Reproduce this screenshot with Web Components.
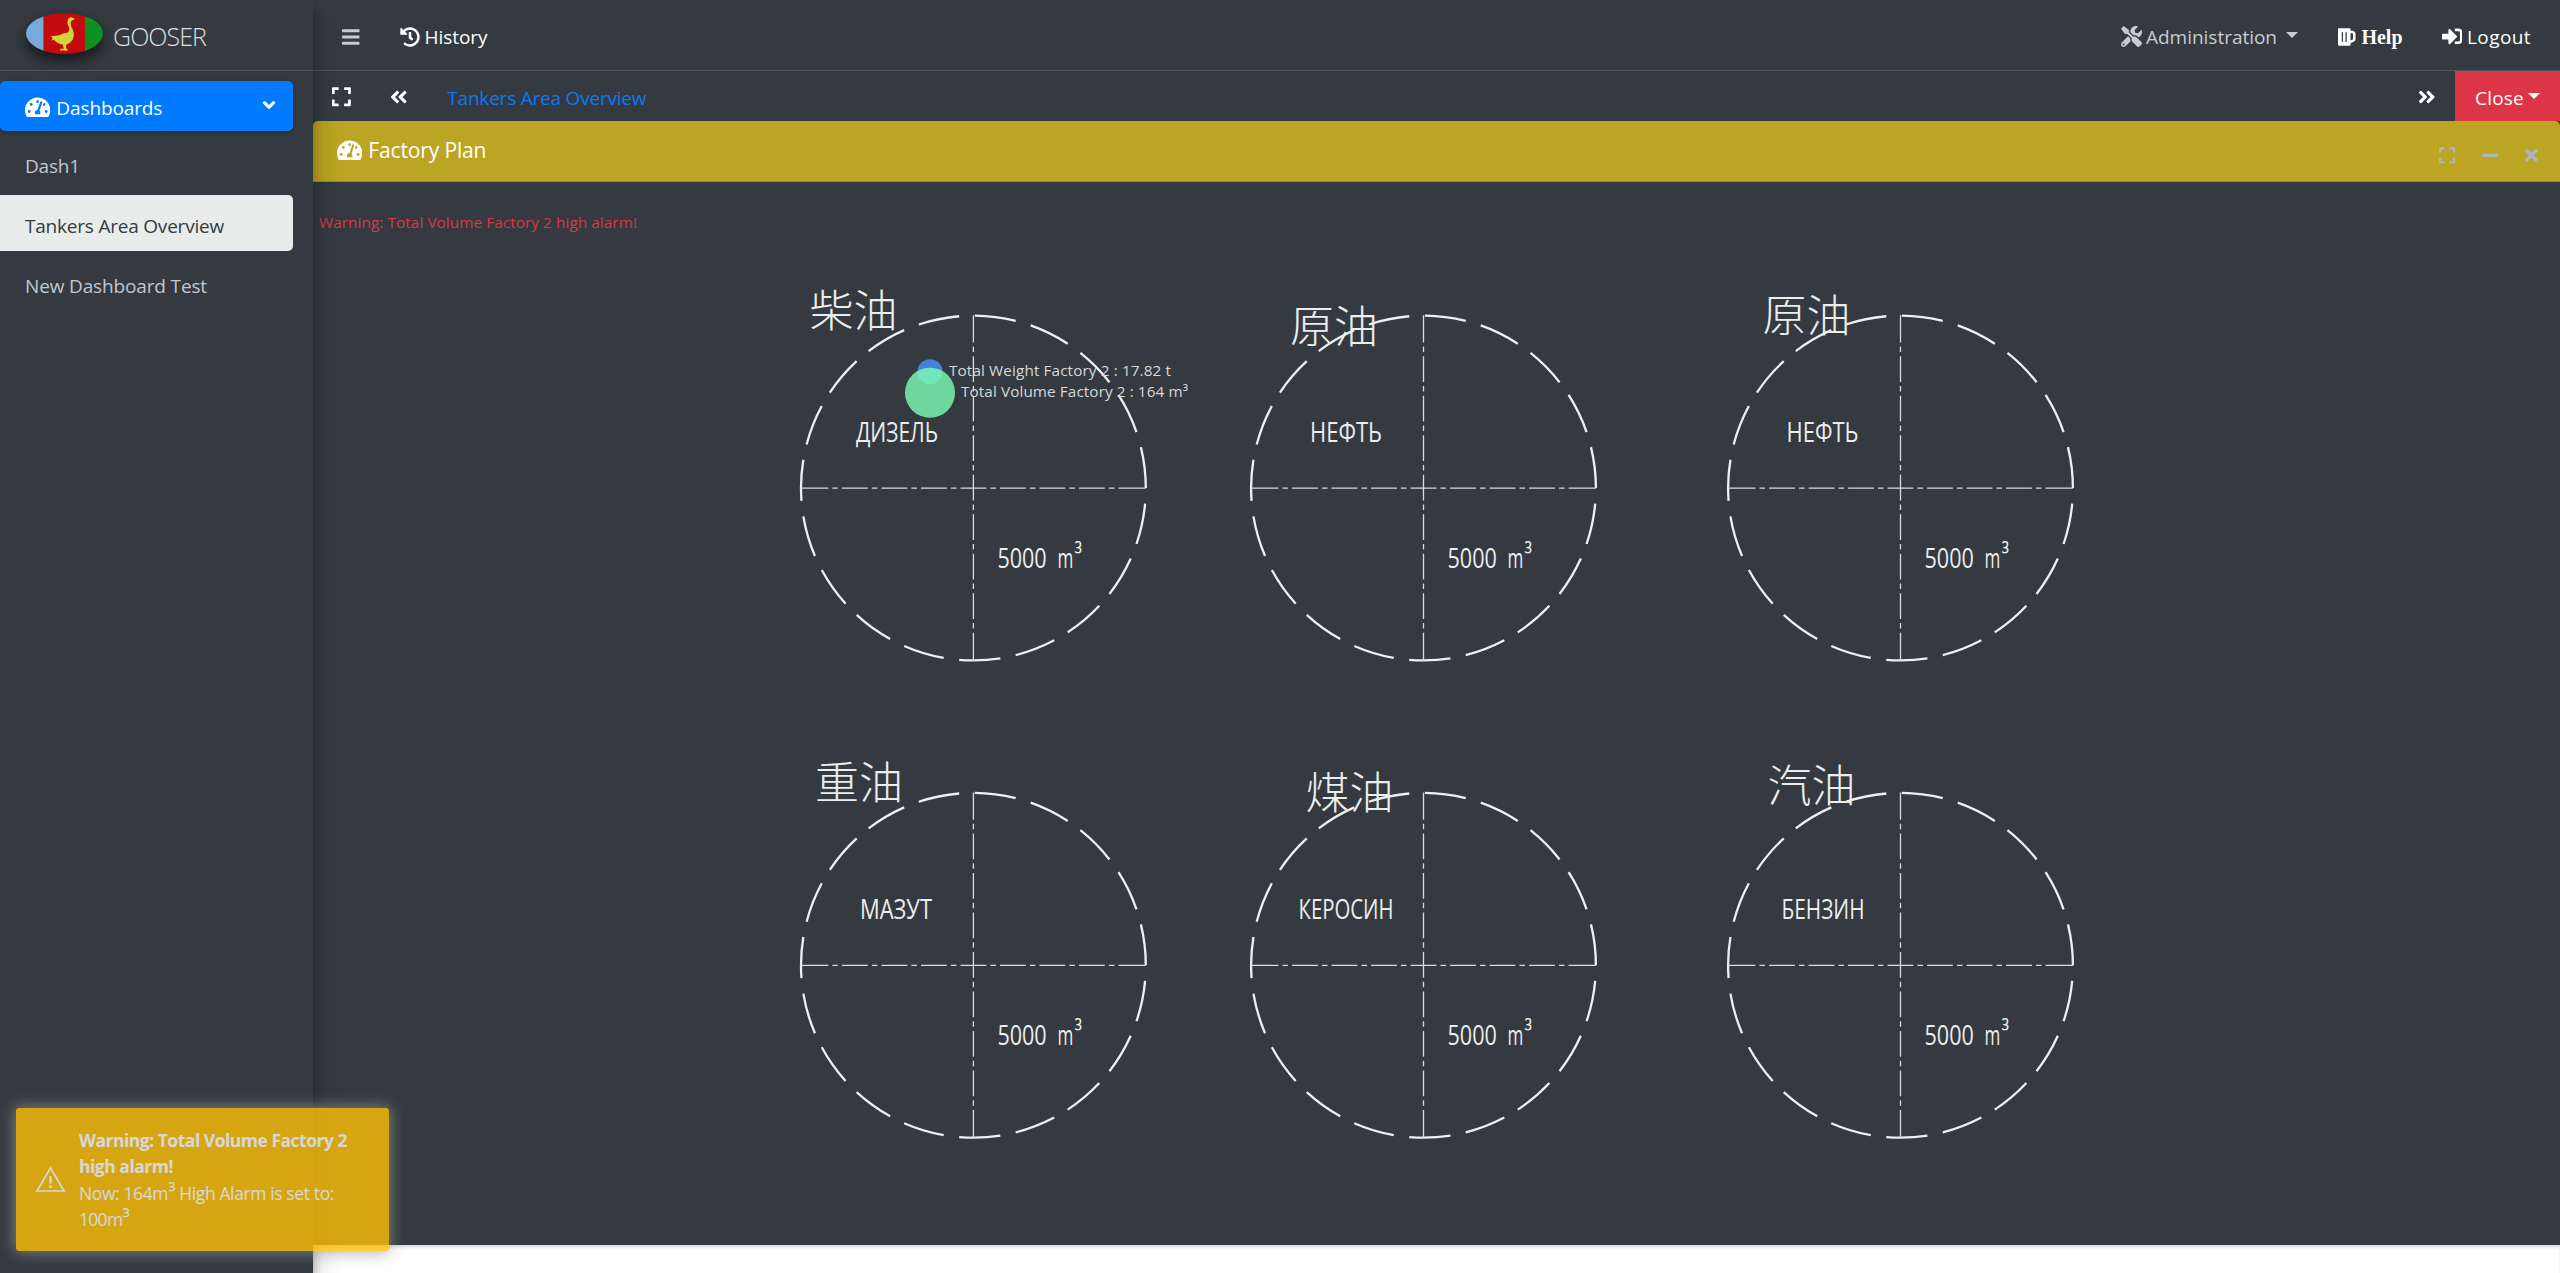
<!DOCTYPE html>
<html lang="en">
<head>
<meta charset="utf-8">
<title>Gooser</title>
<style>
html,body{margin:0;height:100%;background:#fff;overflow:hidden}
body{font-family:"Open Sans","Noto Sans",sans-serif;font-size:19px;color:#fff}
</style>
</head>
<body>
<app-shell></app-shell>
<script>
const ICONS = {
  bars:[448,"M16 132h416c8.837 0 16-7.163 16-16V76c0-8.837-7.163-16-16-16H16C7.163 60 0 67.163 0 76v40c0 8.837 7.163 16 16 16zm0 160h416c8.837 0 16-7.163 16-16v-40c0-8.837-7.163-16-16-16H16c-8.837 0-16 7.163-16 16v40c0 8.837 7.163 16 16 16zm0 160h416c8.837 0 16-7.163 16-16v-40c0-8.837-7.163-16-16-16H16c-8.837 0-16 7.163-16 16v40c0 8.837 7.163 16 16 16z"],
  history:[512,"M504 255.531c.253 136.64-111.18 248.372-247.82 248.468-59.015.042-113.223-20.53-155.822-54.911-11.077-8.94-11.905-25.541-1.839-35.607l11.267-11.267c8.609-8.609 22.353-9.551 31.891-1.984C173.062 425.135 212.781 440 256 440c101.705 0 184-82.311 184-184 0-101.705-82.311-184-184-184-48.814 0-93.149 18.969-126.068 49.932l50.754 50.754c10.08 10.08 2.941 27.314-11.313 27.314H24c-8.837 0-16-7.163-16-16V38.627c0-14.254 17.234-21.393 27.314-11.314l49.372 49.372C129.209 34.136 189.552 8 256 8c136.81 0 247.747 110.78 248 247.531zm-180.912 78.784l9.823-12.63c8.138-10.463 6.253-25.542-4.21-33.679L288 256.349V152c0-13.255-10.745-24-24-24h-16c-13.255 0-24 10.745-24 24v135.651l65.409 50.874c10.463 8.137 25.541 6.253 33.679-4.21z"],
  gauge:[576,"M288 32C128.94 32 0 160.94 0 320c0 52.8 14.25 102.26 39.06 144.8 5.61 9.62 16.3 15.2 27.44 15.2h443c11.14 0 21.83-5.58 27.44-15.2C561.75 422.26 576 372.8 576 320c0-159.06-128.94-288-288-288zm0 64c14.71 0 26.58 10.13 30.32 23.65-1.11 2.26-2.64 4.23-3.45 6.67l-9.22 27.67c-5.13 3.49-10.97 6.01-17.64 6.01-17.67 0-32-14.33-32-32S270.33 96 288 96zM96 384c-17.67 0-32-14.33-32-32s14.33-32 32-32 32 14.33 32 32-14.33 32-32 32zm48-160c-17.67 0-32-14.33-32-32s14.33-32 32-32 32 14.33 32 32-14.33 32-32 32zm246.77-72.41l-61.33 184C343.13 347.33 352 364.54 352 384c0 11.72-3.38 22.55-8.88 32H232.88c-5.5-9.45-8.88-20.28-8.88-32 0-33.94 26.5-61.43 59.9-63.59l61.34-184.01c4.17-12.56 17.73-19.45 30.36-15.17 12.57 4.19 19.35 17.79 15.17 30.36zm14.66 57.2l15.52-46.55c3.47-1.29 7.13-2.23 11.05-2.23 17.67 0 32 14.33 32 32s-14.33 32-32 32c-11.38-.01-20.89-6.28-26.57-15.22zM480 384c-17.67 0-32-14.33-32-32s14.33-32 32-32 32 14.33 32 32-14.33 32-32 32z"],
  tools:[512,"M501.1 395.7L384 278.6c-23.1-23.1-57.6-27.6-85.4-13.9L192 158.1V96L64 0 0 64l96 128h62.1l106.6 106.6c-13.6 27.8-9.2 62.3 13.9 85.4l117.1 117.1c14.6 14.6 38.2 14.6 52.7 0l52.7-52.7c14.5-14.6 14.5-38.2 0-52.7zM331.7 225c28.3 0 54.9 11 74.9 31l19.4 19.4c15.8-6.9 30.8-16.5 43.8-29.5 37.1-37.1 49.7-89.3 37.9-136.7-2.2-9-13.5-12.1-20.1-5.5l-74.4 74.4-67.9-11.3L334 98.9l74.4-74.4c6.6-6.6 3.4-17.9-5.7-20.2-47.4-11.7-99.6.9-136.6 37.9-28.5 28.5-41.9 66.1-41.2 103.6l82.1 82.1c8.1-1.9 16.5-2.9 24.7-2.9zm-103.9 82l-56.7-56.7L18.7 402.8c-25 25-25 65.5 0 90.5s65.5 25 90.5 0l123.6-123.6c-7.6-19.9-9.9-41.6-5-62.7zM64 472c-13.2 0-24-10.8-24-24 0-13.3 10.7-24 24-24s24 10.7 24 24c0 13.2-10.7 24-24 24z"],
  beer:[448,"M368 96h-48V56c0-13.255-10.745-24-24-24H24C10.745 32 0 42.745 0 56v400c0 13.255 10.745 24 24 24h272c13.255 0 24-10.745 24-24v-42.11l80.606-35.977C429.396 365.063 448 336.388 448 304.86V176c0-44.112-35.888-80-80-80zm16 208.86a16.018 16.018 0 0 1-9.479 14.611L320 343.805V160h48c8.822 0 16 7.178 16 16v128.86zM208 384c-8.836 0-16-7.164-16-16V144c0-8.836 7.164-16 16-16s16 7.164 16 16v224c0 8.836-7.164 16-16 16zm-96 0c-8.836 0-16-7.164-16-16V144c0-8.836 7.164-16 16-16s16 7.164 16 16v224c0 8.836-7.164 16-16 16z"],
  signin:[512,"M416 448h-84c-6.6 0-12-5.4-12-12v-40c0-6.6 5.4-12 12-12h84c17.7 0 32-14.3 32-32V160c0-17.7-14.3-32-32-32h-84c-6.6 0-12-5.4-12-12V76c0-6.6 5.4-12 12-12h84c53 0 96 43 96 96v192c0 53-43 96-96 96zm-47-201L201 79c-15-15-41-4.5-41 17v96H24c-13.3 0-24 10.7-24 24v96c0 13.3 10.7 24 24 24h136v96c0 21.5 26 32 41 17l168-168c9.3-9.4 9.3-24.6 0-34z"],
  expand:[448,"M0 180V56c0-13.3 10.7-24 24-24h124c6.6 0 12 5.4 12 12v40c0 6.6-5.4 12-12 12H64v84c0 6.6-5.4 12-12 12H12c-6.6 0-12-5.4-12-12zM288 44v40c0 6.6 5.4 12 12 12h84v84c0 6.600 5.4 12 12 12h40c6.6 0 12-5.4 12-12V56c0-13.3-10.7-24-24-24H300c-6.6 0-12 5.4-12 12zm148 276h-40c-6.6 0-12 5.4-12 12v84h-84c-6.600 0-12 5.4-12 12v40c0 6.6 5.4 12 12 12h124c13.3 0 24-10.7 24-24V332c0-6.6-5.4-12-12-12zM160 468v-40c0-6.6-5.4-12-12-12H64v-84c0-6.6-5.4-12-12-12H12c-6.6 0-12 5.4-12 12v124c0 13.3 10.7 24 24 24h124c6.6 0 12-5.4 12-12z"],
  dleft:[448,"M223.7 239l136-136c9.4-9.4 24.6-9.4 33.9 0l22.6 22.6c9.4 9.4 9.4 24.6 0 33.9L319.900 256l96.4 96.4c9.4 9.4 9.4 24.6 0 33.900L393.7 409c-9.4 9.4-24.6 9.4-33.9 0l-136-136c-9.5-9.4-9.5-24.6-.1-34zm-192 34l136 136c9.4 9.4 24.6 9.4 33.9 0l22.6-22.6c9.4-9.4 9.4-24.6 0-33.9L127.9 256l96.4-96.4c9.4-9.4 9.4-24.6 0-33.9L201.700 103c-9.4-9.4-24.6-9.4-33.9 0l-136 136c-9.5 9.4-9.5 24.6-.1 34z"],
  left:[256,"M31.7 239l136-136c9.4-9.4 24.6-9.4 33.9 0l22.6 22.6c9.4 9.4 9.4 24.6 0 33.9L127.9 256l96.4 96.4c9.4 9.4 9.4 24.6 0 33.9L201.7 409c-9.4 9.4-24.6 9.4-33.9 0l-136-136c-9.5-9.4-9.5-24.6-.1-34z"],
  minus:[448,"M416 208H32c-17.67 0-32 14.33-32 32v32c0 17.67 14.33 32 32 32h384c17.67 0 32-14.33 32-32v-32c0-17.67-14.33-32-32-32z"],
  times:[352,"M242.72 256l100.07-100.07c12.28-12.28 12.28-32.19 0-44.48l-22.24-22.24c-12.28-12.28-32.19-12.28-44.48 0L176 189.28 75.93 89.21c-12.28-12.28-32.19-12.28-44.48 0L9.21 111.45c-12.28 12.28-12.28 32.19 0 44.48L109.28 256 9.21 356.07c-12.28 12.28-12.28 32.19 0 44.48l22.24 22.24c12.28 12.28 32.2 12.28 44.48 0L176 322.72l100.07 100.07c12.28 12.28 32.2 12.28 44.48 0l22.24-22.24c12.28-12.28 12.28-32.19 0-44.48L242.72 256z"]
};

function define(name, html, after) {
  const t = document.createElement('template');
  t.innerHTML = html;
  customElements.define(name, class extends HTMLElement {
    connectedCallback() {
      if (this.shadowRoot) return;
      this.attachShadow({mode: 'open'}).append(document.importNode(t.content, true));
      if (after) after.call(this, this.shadowRoot);
    }
  });
}

/* Solid icon: name picks the drawing, size is the height of its 512-unit box. */
define('ui-icon', `<style>:host{display:block;flex:none}svg{display:block;fill:currentColor}
:host([flip]) svg{transform:scaleX(-1)}:host([down]) svg{transform:rotate(-90deg)}</style><svg><path/></svg>`, function (r) {
  const [w, d] = ICONS[this.getAttribute('name')], s = +this.getAttribute('size') || 20;
  const svg = r.querySelector('svg');
  svg.setAttribute('viewBox', `0 0 ${w} 512`);
  svg.setAttribute('width', w / 512 * s);
  svg.setAttribute('height', s);
  svg.firstChild.setAttribute('d', d);
});

/* One line of text whose tracking is adjusted to span the width w. */
define('ui-text', `<style>:host{display:block;flex:none;width:max-content;white-space:nowrap;line-height:26px}</style><slot></slot>`, function () {
  const w = +this.getAttribute('w');
  if (!w) return;
  const n = this.textContent.length;
  this.style.letterSpacing = (w - this.getBoundingClientRect().width) / n + 'px';
});

define('ui-caret', `<style>:host{display:block;flex:none;width:0;height:0;border:6px solid transparent;border-top-color:currentColor;border-bottom:0}</style>`);

define('goose-logo', `<style>:host{display:block;width:77px;height:41px;border-radius:50%;box-shadow:0 8px 16px rgba(0,0,0,.4),0 5px 8px rgba(0,0,0,.3)}svg{display:block}</style>
<svg width="77" height="41" viewBox="78 39 231 122"><defs><clipPath id="c"><ellipse cx="193.500" cy="100" rx="115.500" ry="61"/></clipPath></defs>
<g clip-path="url(#c)"><rect x="78" y="39" width="53" height="122" fill="#78a9db"/><rect x="131" y="39" width="124" height="122" fill="#c30b0e"/><rect x="255" y="39" width="54" height="122" fill="#0b9322"/></g>
<path fill="#cdd63c" d="M203 60Q204 52 214 51L224 55Q223 59 216 61Q211 63 212 71Q213 79 218 88Q225 104 218 118Q211 130 199 133L198 144L204 148L201 152L180 150L181 146L191 146L189 134Q172 131 161 119L154 121L158 114L152 107Q164 108 178 105Q191 98 204 97Q210 88 206 79Q201 70 203 60Z"/></svg>`);

define('nav-item', `<style>
:host{display:flex;align-items:center;box-sizing:border-box;width:293px;height:56px;margin-bottom:4px;padding:5px 19px 0 25px;border-radius:0 5px 5px 0;color:#c2c7d0;gap:6px}
:host([current]){background:#eaecec;color:#343a40}
:host([group]){height:50px;padding-top:3px;background:#007bff;color:#fff;border-radius:5px;box-shadow:0 1px 4px rgba(0,0,0,.3)}
::slotted([down]){margin-left:auto;position:relative;top:-3px}
</style><slot></slot>`);

define('side-bar', `<style>
:host{display:flex;flex-direction:column;position:relative;z-index:3;background:#343a40;box-shadow:0 14px 28px rgba(0,0,0,.25),0 10px 10px rgba(0,0,0,.22)}
.brand{display:flex;box-sizing:border-box;height:71px;padding:13px 0 0 26px;border-bottom:1px solid #4b545c;gap:10px}
.brand ui-text{font-weight:300;font-size:25px;line-height:30px;margin-top:8px;color:#dcdedf}
nav{padding-top:10px}
</style>
<div class="brand"><goose-logo></goose-logo><ui-text w="93">GOOSER</ui-text></div>
<nav>
<nav-item group><ui-icon name="gauge" size="22.500"></ui-icon><ui-text w="106">Dashboards</ui-text><ui-icon name="left" size="20" down></ui-icon></nav-item>
<nav-item><ui-text w="55">Dash1</ui-text></nav-item>
<nav-item current><ui-text w="199">Tankers Area Overview</ui-text></nav-item>
<nav-item><ui-text w="182">New Dashboard Test</ui-text></nav-item>
</nav>`);

define('top-bar', `<style>
:host{display:flex;align-items:center;box-sizing:border-box;height:71px;padding:3px 29px 0 29px;border-bottom:1px solid #4b545c}
.l{display:flex;align-items:center;gap:5px}
.l ui-text{padding-top:1px}
.sp{flex:1}.dim{color:#c8cccf}
.help{font:bold 20px "Liberation Serif",serif}
</style>
<ui-icon class="dim" name="bars"></ui-icon>
<div class="l" style="margin-left:40px"><ui-icon name="history"></ui-icon><ui-text w="63">History</ui-text></div>
<div class="sp"></div>
<div class="l dim" style="gap:4px"><ui-icon name="tools" size="21"></ui-icon><ui-text w="131">Administration</ui-text></div>
<ui-caret class="dim" style="margin-left:9px;margin-top:-3px"></ui-caret>
<div class="l" style="margin-left:40px;gap:6px"><ui-icon name="beer"></ui-icon><ui-text class="help" w="41">Help</ui-text></div>
<div class="l" style="margin-left:39px"><ui-icon name="signin" size="20.500"></ui-icon><ui-text w="64">Logout</ui-text></div>`);

define('tab-bar', `<style>
:host{display:flex;align-items:center;height:50px;padding-left:19px}
.tab{color:#0a78f5;margin-left:40px;padding-top:4px}
.sp{flex:1}
.close{display:flex;align-items:center;background:#dc3545;height:50px;width:105px;box-sizing:border-box;padding-left:20px;gap:4px}
ui-icon{margin-top:2px}
</style>
<ui-icon name="expand" size="21.500"></ui-icon>
<ui-icon name="dleft" style="margin-left:39px"></ui-icon>
<ui-text class="tab" w="199">Tankers Area Overview</ui-text>
<div class="sp"></div>
<ui-icon name="dleft" flip style="margin-right:20px"></ui-icon>
<div class="close"><ui-text w="49" style="padding-top:4px">Close</ui-text><ui-caret></ui-caret></div>`);

/* Tank farm drawing; units are page pixels, origin at the body's top left corner (313,182). */
const TANKS = [
  [973.4, 488.05, '柴油', 809.5, 327, 'ДИЗЕЛЬ', 856, 82],
  [1423.5, 488.05, '原油', 1290, 342.5, 'НЕФТЬ', 1310, 72],
  [1900.5, 488.05, '原油', 1762.5, 331.5, 'НЕФТЬ', 1786.5, 72],
  [973.4, 965.3, '重油', 815, 799, 'МАЗУТ', 860, 72],
  [1423.5, 965.3, '煤油', 1305.5, 809, 'КЕРОСИН', 1298.5, 95],
  [1900.5, 965.3, '汽油', 1767.5, 802, 'БЕНЗИН', 1781.5, 83]
];
define('tank-plan', `<style>
:host{display:block;flex:1;min-height:0;overflow:hidden}
svg{display:block}
.ring,.axis{fill:none;stroke:#eeefef}
.ring{stroke-width:2.300}.axis{stroke-width:1.300;stroke:#d9dbdc}
.cjk{font:300 44px "Noto Sans CJK SC",sans-serif;fill:#eceded}
.cad{font:400 28px "Open Sans",sans-serif;fill:#eceded}
.sup{font-size:27px}
.alarm{font-size:15.300px;fill:#dc3545}
.val{font-size:15.300px;fill:#d6d8d9}
</style><svg width="2247" height="1063" viewBox="313 182 2247 1063"></svg>`, function (r) {
  const R = 172.4;
  const dash = [27.3, 4.1, 5.4, 4.2];
  for (let i = 0; i < 7; i++) dash.push(25.8, 4.1, 5.5, 4.1);
  dash.push(28, 50);
  let s = `<text class="alarm" x="319" y="228" textLength="318">Warning: Total Volume Factory 2 high alarm!</text>`;
  for (const [x, y, zh, zx, zy, ru, rx, rw] of TANKS) {
    s += `<path class="ring" pathLength="360" stroke-dasharray="13.750 5.197" d="M${x + R} ${y}A${R} ${R} 0 0 0 ${x - R} ${y}A${R} ${R} 0 0 0 ${x + R} ${y}"/>
<path class="axis" stroke-dasharray="${dash}" d="M${x - R} ${y}h${2 * R}"/><path class="axis" stroke-dasharray="${dash}" d="M${x} ${y - R - .5}v${2 * R + 1}"/>
<text class="cjk" x="${zx}" y="${zy}">${zh}</text>
<text class="cad" x="${rx}" y="${y - 46}" textLength="${rw}" lengthAdjust="spacingAndGlyphs">${ru}</text>
<text class="cad" transform="translate(${x + 24} ${y + 80}) scale(.77 1)">5000</text>
<text class="cad" transform="translate(${x + 84} ${y + 80}) scale(.61 1)">m</text>
<text class="cad sup" transform="translate(${x + 101} ${y + 75.5}) scale(.8 1)">³</text>`;
  }
  s += `<circle cx="930" cy="371.700" r="12.500" fill="#4483dc"/><circle cx="930" cy="392.700" r="25" fill="rgba(125,255,180,.8)"/>
<text class="val" x="949" y="376" textLength="222">Total Weight Factory 2 : 17.82 t</text>
<text class="val" x="961" y="397" textLength="227">Total Volume Factory 2 : 164 m³</text>`;
  r.querySelector('svg').innerHTML = s;
});

define('plan-card', `<style>
:host{display:flex;flex-direction:column;flex:1;min-height:0}
header{display:flex;align-items:center;box-sizing:border-box;height:61px;padding:0 22px 0 24px;background:#bca523;border-bottom:1px solid #a08d20;border-radius:5px 5px 0 0;gap:6px}
header ui-text{font-size:21px;margin-top:-2px}
.tools{display:flex;align-items:center;margin-left:auto;gap:27px;color:#adb5bd;padding-top:9px}
</style>
<header><ui-icon name="gauge" size="22.500" style="margin-top:-2px"></ui-icon><ui-text w="118">Factory Plan</ui-text>
<div class="tools"><ui-icon name="expand" size="18.500"></ui-icon><ui-icon name="minus" size="18.500"></ui-icon><ui-icon name="times" size="18.500"></ui-icon></div></header>
<tank-plan></tank-plan>`);

define('alarm-toast', `<style>
:host{display:flex;position:absolute;z-index:5;left:15px;top:1107px;width:375px;height:145px;box-sizing:border-box;border:1px solid transparent;background:#ffc107;background-clip:padding-box;border-radius:4px;box-shadow:0 0 15px #999;opacity:.8;align-items:center;color:#fff;font-size:17.500px;padding:0 0 0 19px;gap:13px}
svg{flex:none}
ui-text{line-height:26.500px}
b{font-weight:700}
.p{font-size:21px;line-height:0}
</style>
<svg width="31" height="27" viewBox="0 0 31 27" fill="none" stroke="#fff"><path stroke-width="1.700" d="M15.500 2L29 25H2Z"/><path stroke-width="2.400" d="M15.500 10v7.500M15.500 19.500v2.500"/></svg>
<div><ui-text w="268"><b>Warning: Total Volume Factory 2</b></ui-text><ui-text w="94"><b>high alarm!</b></ui-text><ui-text w="255">Now: 164m<span class="p">³</span> High Alarm is set to:</ui-text><ui-text w="50">100m<span class="p">³</span></ui-text></div>`);

define('app-shell', `<style>
:host{display:grid;grid-template-columns:313px 1fr;height:1273px;width:2560px;position:relative;overflow:hidden}
main{display:flex;flex-direction:column;background:#343a40;min-width:0}
footer{height:28px;background:#fff;box-shadow:inset 0 3px 4px -2px rgba(0,0,0,.25)}
</style>
<side-bar></side-bar>
<main><top-bar></top-bar><tab-bar></tab-bar><plan-card></plan-card><footer></footer></main>
<alarm-toast></alarm-toast>`);
</script>
</body>
</html>
